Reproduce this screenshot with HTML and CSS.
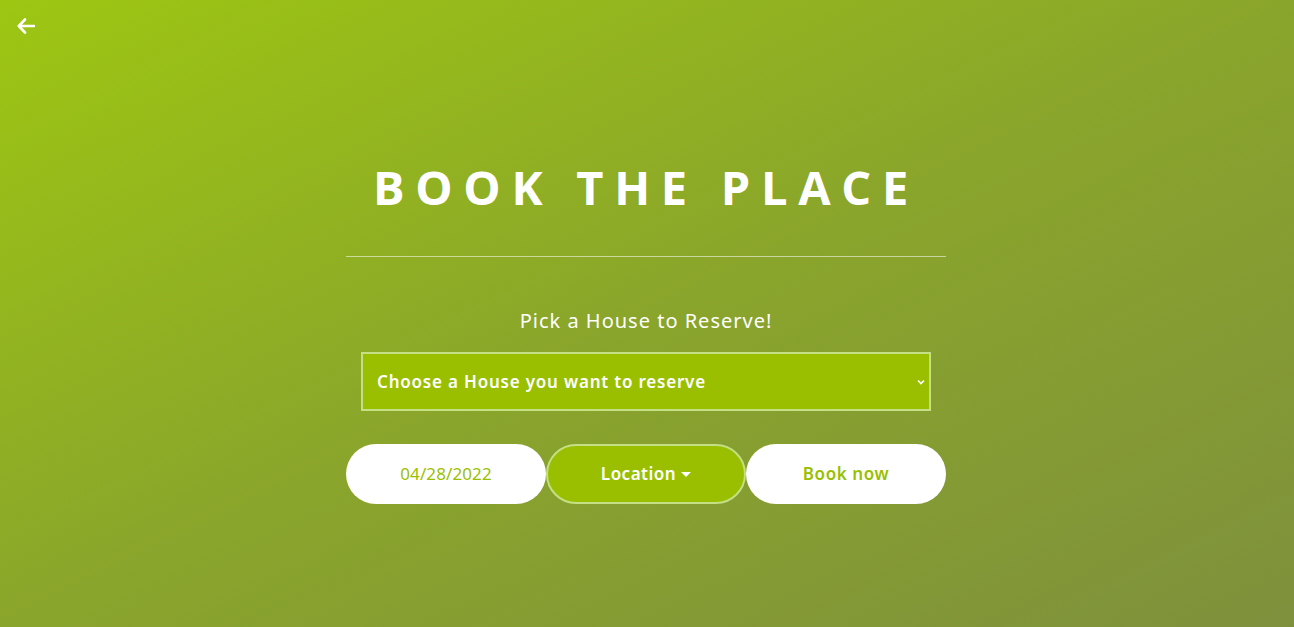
FILE: index.html
```html
<!DOCTYPE html>
<html>
<head>
<meta charset="utf-8">
<link rel="stylesheet" href="styles.css">
</head>
<body>
<div class="page">
  <a class="back" href="#">
    <svg width="18" height="16" viewBox="0 0 18 16"><path d="M8 1.5 L1.8 8 L8 14.5 M2 8 H17" fill="none" stroke="#fff" stroke-width="2.6" stroke-linecap="round" stroke-linejoin="round"/></svg>
  </a>
  <main class="box">
    <h1 class="title">BOOK THE PLACE</h1>
    <hr class="rule">
    <p class="sub">Pick a House to Reserve!</p>
    <div class="select">
      <span>Choose a House you want to reserve</span>
      <svg class="chev" width="8" height="6" viewBox="0 0 8 6"><path d="M1 1.5 L4 4.5 L7 1.5" fill="none" stroke="#fff" stroke-width="1.6"/></svg>
    </div>
    <div class="actions">
      <div class="pill white date">04/28/2022</div>
      <div class="pill green">Location <span class="caret"></span></div>
      <div class="pill white strong">Book now</div>
    </div>
  </main>
</div>
</body>
</html>
```

FILE: styles.css
```css
html, body { margin: 0; padding: 0; height: 100%; }
body {
  font-family: "Noto Sans", "Open Sans", sans-serif;
  color: #fff;
}
.page {
  position: relative;
  height: 627px;
  overflow: hidden;
  background: linear-gradient(to bottom right, #9dc612 0%, #8aa52b 50%, #7e903c 100%);
}
.back {
  position: absolute;
  left: 17px;
  top: 18px;
  display: block;
  line-height: 0;
}
.box {
  width: 600px;
  margin: 0 0 0 calc(50% - 301px);
  padding-top: 160px;
  display: flex;
  flex-direction: column;
  align-items: center;
}
.title {
  margin: 0;
  font-family: "Open Sans", sans-serif;
  font-weight: 700;
  font-size: 47px;
  line-height: 54px;
  letter-spacing: 10.7px;
  white-space: nowrap;
}
.rule {
  width: 600px;
  margin: 42px 0 0;
  border: 0;
  border-top: 1px solid rgba(255,255,255,0.55);
  height: 0;
}
.sub {
  margin: 52px 0 0;
  font-size: 20px;
  line-height: 24px;
  letter-spacing: 1px;
}
.select {
  box-sizing: border-box;
  margin-top: 19px;
  width: 570px;
  height: 59px;
  background: #99bf00;
  border: 2px solid #c4df84;
  display: flex;
  align-items: center;
  justify-content: space-between;
  padding: 0 4px 0 14px;
  font-size: 17px;
  font-weight: 600;
  letter-spacing: 0.8px;
}
.chev { margin-top: 1px; }
.actions {
  margin-top: 33px;
  display: flex;
  width: 600px;
}
.pill {
  box-sizing: border-box;
  width: 200px;
  height: 60px;
  border-radius: 30px;
  display: flex;
  align-items: center;
  justify-content: center;
  font-size: 17px;
  padding-bottom: 1px;
}
.white { background: #fff; color: #99bf00; }
.date { font-weight: 400; letter-spacing: 0.1px; }
.strong { font-weight: 600; letter-spacing: 0.6px; }
.green {
  background: #99bf00;
  border: 2px solid #c4df84;
  font-weight: 600;
  letter-spacing: 0.5px;
}
.caret {
  display: inline-block;
  width: 0; height: 0;
  margin-left: 5px;
  margin-top: 2px;
  border-left: 5px solid transparent;
  border-right: 5px solid transparent;
  border-top: 5px solid #fff;
}
```
